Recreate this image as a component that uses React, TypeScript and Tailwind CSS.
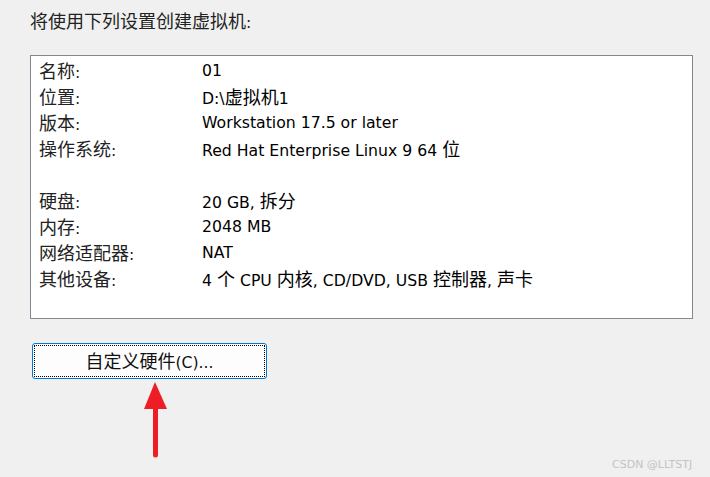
import React from "react";

const FONT = '"DejaVu Sans", "Noto Sans CJK SC", sans-serif';

function Txt({ s }: { s: string }) {
  const runs: { cjk: boolean; t: string }[] = [];
  for (const ch of s) {
    const cjk = /[\u3000-\u9fff\uff00-\uffef]/.test(ch);
    const last = runs[runs.length - 1];
    if (last && last.cjk === cjk) last.t += ch;
    else runs.push({ cjk, t: ch });
  }
  return (
    <>
      {runs.map((r, i) =>
        r.cjk ? (
          <span key={i} className="text-[18px]" style={{ fontFamily: '"Noto Sans CJK SC", sans-serif' }}>
            {r.t}
          </span>
        ) : (
          <span key={i} className="text-[15.7px]">
            {r.t}
          </span>
        )
      )}
    </>
  );
}

const rows: ([string, string] | null)[] = [
  ["名称:", "01"],
  ["位置:", "D:\\虚拟机1"],
  ["版本:", "Workstation 17.5 or later"],
  ["操作系统:", "Red Hat Enterprise Linux 9 64 位"],
  null,
  ["硬盘:", "20 GB, 拆分"],
  ["内存:", "2048 MB"],
  ["网络适配器:", "NAT"],
  ["其他设备:", "4 个 CPU 内核, CD/DVD, USB 控制器, 声卡"],
];

export default function App() {
  return (
    <div
      className="relative w-[710px] h-[477px] bg-[#f0f0f0] flex flex-col text-[#111] overflow-hidden"
      style={{ fontFamily: FONT }}
    >
      <div className="pt-[9px] pl-[30px] h-[55px] leading-[22px] text-[#222] whitespace-nowrap">
        <Txt s="将使用下列设置创建虚拟机:" />
      </div>

      <div className="ml-[30px] w-[663px] h-[264px] border border-[#828790] bg-white pt-[2px] pl-[8px]">
        {rows.map((r, i) =>
          r ? (
            <div key={i} className="flex h-[26px] items-center leading-[26px] whitespace-nowrap">
              <div className="w-[163px] text-[#222]">
                <Txt s={r[0]} />
              </div>
              <div className="text-black">
                <Txt s={r[1]} />
              </div>
            </div>
          ) : (
            <div key={i} className="h-[26px]" />
          )
        )}
      </div>

      <div className="mt-[24px] ml-[32px] w-[235px] h-[36px] relative rounded-[3px] border border-[#0078d7] bg-[#fdfdfd] flex items-center justify-center leading-[22px] text-[#111] whitespace-nowrap">
        <div className="absolute inset-[1px] border border-dotted border-black" />
        <span className="relative">
          <Txt s="自定义硬件(C)..." />
        </span>
      </div>

      <svg
        className="absolute left-[140px] top-[380px]"
        width="32"
        height="82"
        viewBox="0 0 32 82"
      >
        <polygon points="15,2 4,29 27,29" fill="#ee1c25" />
        <line x1="15.5" y1="26" x2="15.5" y2="75" stroke="#ee1c25" strokeWidth="5" strokeLinecap="round" />
      </svg>

      <div
        className="absolute left-[612px] top-[458px] text-[11px] leading-[14px] text-[#c4c4c4] whitespace-nowrap"
        style={{ fontFamily: '"DejaVu Sans", sans-serif' }}
      >
        CSDN @LLTSTJ
      </div>
    </div>
  );
}
